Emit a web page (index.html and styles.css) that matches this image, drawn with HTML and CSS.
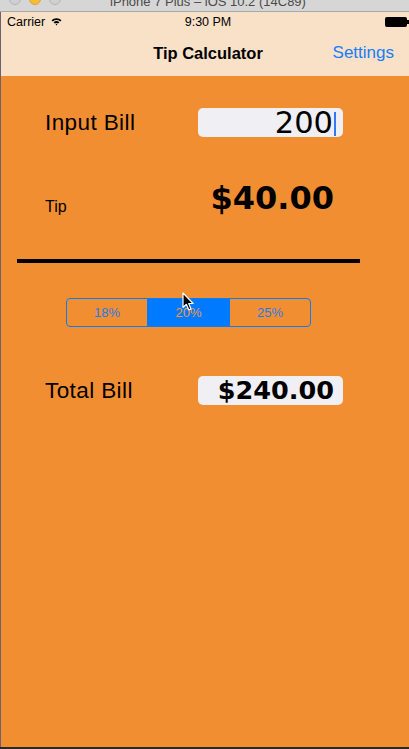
FILE: index.html
```html
<!DOCTYPE html>
<html>
<head>
<meta charset="utf-8">
<link rel="stylesheet" href="styles.css">
</head>
<body>
<div class="window">
  <div class="titlebar">
    <div class="lights">
      <span class="light light-gray"></span>
      <span class="light light-yellow"></span>
      <span class="light light-gray"></span>
    </div>
    <div class="wintitle">iPhone 7 Plus – iOS 10.2 (14C89)</div>
    <div></div>
  </div>
  <div class="app">
    <div class="statusbar">
      <div class="carrier">Carrier
        <svg class="wifi" width="11" height="9" viewBox="0 0 11 9">
          <path d="M0.5 3.2 A7.2 7.2 0 0 1 10.5 3.2 L9.2 4.5 A5.4 5.4 0 0 0 1.8 4.5 Z" fill="#000"/>
          <path d="M2.6 5.3 A4.2 4.2 0 0 1 8.4 5.3 L7.1 6.6 A2.4 2.4 0 0 0 3.9 6.6 Z" fill="#000"/>
          <path d="M4.6 7.3 A1.3 1.3 0 0 1 6.4 7.3 L5.5 8.5 Z" fill="#000"/>
        </svg>
      </div>
      <div class="time">9:30 PM</div>
      <div class="battery">
        <svg width="24" height="10" viewBox="0 0 24 10">
          <rect x="0.5" y="0.5" width="21" height="9" rx="1" fill="#000" stroke="#000"/>
          <rect x="22" y="3" width="2" height="4" fill="#000"/>
        </svg>
      </div>
    </div>
    <div class="navbar">
      <div></div>
      <div class="navtitle">Tip Calculator</div>
      <div class="navaction">Settings</div>
    </div>
    <div class="content">
      <div class="row row-input">
        <div class="label">Input Bill</div>
        <div class="field field-input"><span class="field-text">200</span><span class="caret"></span></div>
      </div>
      <div class="row row-tip">
        <div class="label label-small">Tip</div>
        <div class="tipvalue">$40.00</div>
      </div>
      <div class="divider"></div>
      <div class="segmented">
        <div class="segment">18%</div>
        <div class="segment segment-selected">20%</div>
        <div class="segment">25%</div>
        <svg class="pointer" width="13" height="20" viewBox="0 0 13 20">
          <path d="M1 1 L1 15.5 L4.4 12.3 L6.8 18 L9 17 L6.7 11.5 L11.2 11.5 Z" fill="#000" stroke="#fff" stroke-width="1.2" stroke-linejoin="round"/>
        </svg>
      </div>
      <div class="row row-total">
        <div class="label">Total Bill</div>
        <div class="field field-total">$240.00</div>
      </div>
    </div>
  </div>
  <div class="bottomedge"></div>
</div>
</body>
</html>
```
FILE: styles.css
```css
* { box-sizing: border-box; }
html, body {
  margin: 0;
  padding: 0;
  width: 409px;
  height: 749px;
  overflow: hidden;
  font-family: "Liberation Sans", Arial, sans-serif;
  background: #1c1c1e;
}
.window {
  display: flex;
  flex-direction: column;
  height: 749px;
}
.titlebar {
  height: 12px;
  background: #d6d6d6;
  border-bottom: 1px solid #a8a8a8;
  display: grid;
  grid-template-columns: 1fr auto 1fr;
  padding-left: 7px;
  overflow: hidden;
}
.lights {
  display: flex;
  gap: 8px;
  margin-top: -7px;
  margin-left: 2px;
}
.light {
  width: 12px;
  height: 12px;
  border-radius: 50%;
  display: block;
}
.light-gray {
  background: #d0d0d0;
  border: 1px solid #b4b4b4;
}
.light-yellow {
  background: #f6bd3b;
  border: 1px solid #dea32c;
}
.wintitle {
  font-size: 13px;
  line-height: 13px;
  margin-top: -5px;
  color: #4a4a4a;
  white-space: nowrap;
}
.app {
  flex: 1;
  display: flex;
  flex-direction: column;
  border-left: 1px solid #6f6070;
}
.statusbar {
  height: 20px;
  background: #f9e1c8;
  display: grid;
  grid-template-columns: 1fr auto 1fr;
  align-items: center;
  padding-left: 6px;
  padding-right: 0;
  font-size: 12.5px;
  line-height: 20px;
  color: #000;
}
.carrier {
  display: flex;
  align-items: center;
}
.wifi {
  margin-left: 6px;
  margin-top: -2px;
}
.time {
  text-align: center;
}
.battery {
  display: flex;
  justify-content: flex-end;
  align-items: center;
  margin-top: -1px;
}
.navbar {
  height: 44px;
  background: #f9e1c8;
  display: grid;
  grid-template-columns: 1fr auto 1fr;
  align-items: center;
  padding-left: 21px;
  padding-right: 15px;
}
.navtitle {
  font-size: 16.5px;
  font-weight: bold;
  color: #000;
  margin-top: -2px;
}
.navaction {
  justify-self: end;
  font-size: 17px;
  color: #147efb;
  margin-top: -2px;
}
.content {
  flex: 1;
  background: #f28e32;
  display: flex;
  flex-direction: column;
}
.row {
  display: flex;
  align-items: center;
  padding-left: 44px;
  padding-right: 66px;
}
.label {
  flex: 1;
  font-size: 22.5px;
  letter-spacing: 0.4px;
  color: #000;
}
.label-small {
  font-size: 16px;
  line-height: 17px;
  letter-spacing: 0;
  align-self: flex-end;
}
.row-input {
  margin-top: 32px;
}
.field {
  width: 145px;
  height: 29px;
  border-radius: 5px;
  background: #efeff4;
  display: flex;
  align-items: center;
  justify-content: flex-end;
}
.field-input {
  padding-right: 7px;
}
.field-text {
  font-family: "DejaVu Sans", sans-serif;
  font-size: 30.5px;
  line-height: 29px;
  margin-right: 1px;
}
.caret {
  width: 2px;
  height: 24px;
  background: #3478f6;
  margin-top: 2px;
}
.row-tip {
  margin-top: 44px;
  align-items: flex-end;
}
.tipvalue {
  width: 145px;
  text-align: right;
  font-family: "DejaVu Sans", sans-serif;
  font-size: 32px;
  line-height: 34px;
  font-weight: bold;
  padding-right: 9px;
}
.divider {
  margin-top: 44px;
  margin-left: 16px;
  width: 343px;
  height: 4px;
  background: #000;
}
.segmented {
  position: relative;
  margin-top: 35px;
  margin-left: 65px;
  width: 245px;
  height: 29px;
  border: 1px solid #127bf3;
  border-radius: 4px;
  display: grid;
  grid-template-columns: 80px 83px 1fr;
  overflow: visible;
}
.segment {
  display: flex;
  align-items: center;
  justify-content: center;
  font-size: 13px;
  color: #1f7ce8;
}
.segment-selected {
  background: #007aff;
  color: #f0963e;
}
.pointer {
  position: absolute;
  left: 115px;
  top: -7px;
}
.row-total {
  margin-top: 49px;
}
.field-total {
  font-family: "DejaVu Sans", sans-serif;
  font-size: 25.5px;
  line-height: 29px;
  font-weight: bold;
  padding-right: 9px;
}
.bottomedge {
  height: 2px;
  background: #2a2a2c;
}
```
